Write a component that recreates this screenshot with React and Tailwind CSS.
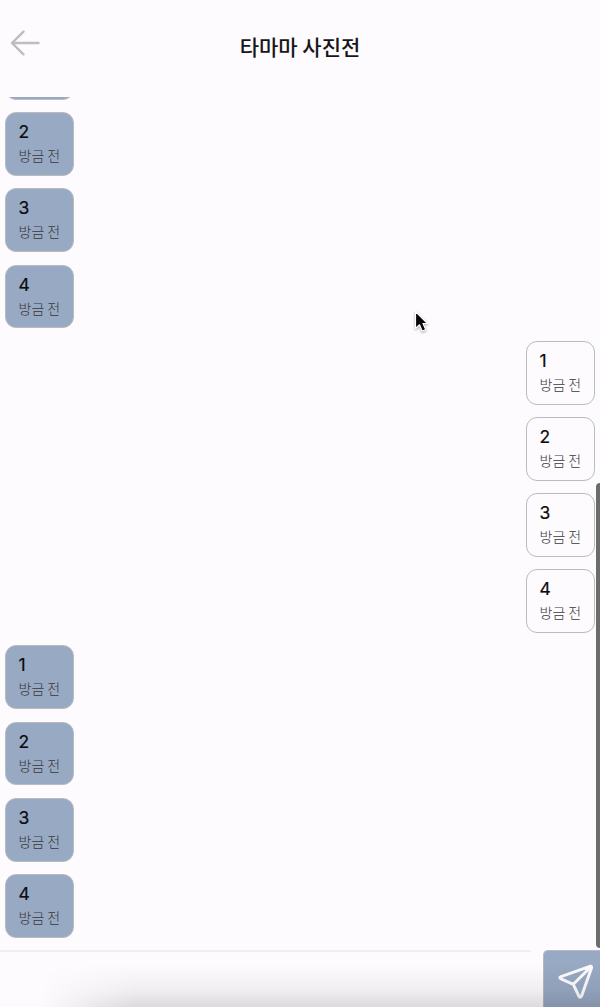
const messages = [
  { text: '', mine: false },
  { text: '2', mine: false },
  { text: '3', mine: false },
  { text: '4', mine: false },
  { text: '1', mine: true },
  { text: '2', mine: true },
  { text: '3', mine: true },
  { text: '4', mine: true },
  { text: '1', mine: false },
  { text: '2', mine: false },
  { text: '3', mine: false },
  { text: '4', mine: false },
];

function Message({ text, mine }) {
  return (
    <li
      className={`flex h-[63.8px] w-[69px] shrink-0 flex-col rounded-[11px] border border-[#bbbbbd] pl-[12.5px] pt-[7px] ${
        mine ? 'self-end bg-[#fdfbfe]' : 'self-start bg-[#98a9c3]'
      }`}
    >
      {text && (
        <>
          <span className="h-[23px] font-['Inter','Noto_Sans_CJK_KR',sans-serif] text-[17.5px] font-normal leading-6 text-[#0c0c0e] [-webkit-text-stroke:0.2px]">
            {text}
          </span>
          <span className="whitespace-nowrap font-['Noto_Sans_CJK_KR',sans-serif] text-[14px] font-light leading-6 text-[#38383c]">
            방금 전
          </span>
        </>
      )}
    </li>
  );
}

function Header() {
  return (
    <header className="grid h-[97px] shrink-0 grid-cols-[1fr_auto_1fr] items-start">
      <button aria-label="뒤로" className="mt-[29px] ml-[10px] w-[30px]">
        <svg width="30" height="28" viewBox="0 0 30 28" fill="none" stroke="#bdbdbd" strokeWidth="2.4" strokeLinecap="round" strokeLinejoin="round">
          <path d="M13.5 2.7 2 14l11.5 11.3M2 14h26.5" />
        </svg>
      </button>
      <h1 className="mt-[31px] font-['Noto_Sans_CJK_KR',sans-serif] text-[21px] font-medium leading-[30px] text-[#161618]">
        타마마 사진전
      </h1>
    </header>
  );
}

function Composer() {
  return (
    <footer className="relative flex h-[57px] shrink-0 justify-between">
      <div className="h-full w-[531px] border-t-2 border-[#efeef0]" />
      <button aria-label="보내기" className="h-full w-[57px] rounded-tl-[5px] border-l border-t border-[#b4b9c4] bg-[#98a9c3]">
        <svg width="56" height="56" viewBox="0 0 56 56" fill="none" stroke="#fcfbfe" strokeWidth="3" strokeLinecap="round" strokeLinejoin="round">
          <path d="M46 15.3 17 25.7Q14.8 26.7 17 27.8L29.3 33.3 35 45.3Q36.5 47.5 37.6 45L47.5 17Q48 14.8 46 15.3ZM29.3 33.3 46.5 16.2" />
        </svg>
      </button>
      <div className="pointer-events-none absolute inset-0 bg-linear-to-b from-transparent from-25% via-black/5 via-70% to-black/13 [mask-image:linear-gradient(to_right,transparent_40px,black_135px)]" />
    </footer>
  );
}

export default function App() {
  return (
    <main className="relative flex h-[1007px] w-[600px] flex-col overflow-hidden bg-[#fdfbfe]">
      <Header />
      <ul className="flex min-h-0 flex-1 flex-col justify-end gap-[12.4px] overflow-hidden px-[5px] pb-[12.2px]">
        {messages.map((message, index) => (
          <Message key={index} {...message} />
        ))}
      </ul>
      <Composer />
      <div className="absolute top-[483px] right-[-4px] h-[465px] w-2 rounded-full bg-[#6c6c6c]" />
      <svg className="absolute top-[310px] left-[413px] drop-shadow-[0_1px_1px_rgba(0,0,0,0.35)]" width="18" height="24" viewBox="0 0 18 24">
        <path d="M2.5 1.5v17l4-3.7 2.7 6.4 3.5-1.6-2.7-6.1H14.5Z" fill="#050505" stroke="white" strokeWidth="1.2" strokeLinejoin="round" />
      </svg>
    </main>
  );
}
